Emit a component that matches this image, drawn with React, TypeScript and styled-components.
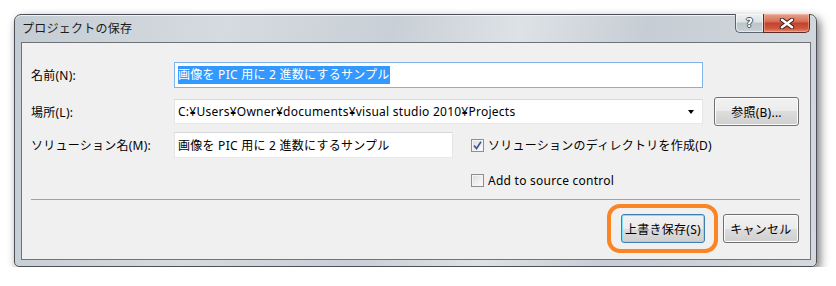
import React from 'react';
import styled, { createGlobalStyle } from 'styled-components';

const GlobalStyle = createGlobalStyle`
    body {
        margin: 0;
        background: #ffffff;
        font-family: "Noto Sans", "Noto Sans CJK JP", sans-serif;
        font-size: 12px;
        letter-spacing: 0.25px;
        color: #000;
    }
`

export default function App() {
  return (
    <Page>
        <GlobalStyle />
        <Window>
            <TitleBar>
                <Caption>プロジェクトの保存</Caption>
                <CaptionButtons>
                    <HelpButton>?</HelpButton>
                    <CloseButton>
                        <svg width="16" height="11" viewBox="0 0 16 11">
                            <path d="M3 1.8 L13 9.2 M13 1.8 L3 9.2" stroke="#3b1a14" strokeWidth="4.4" strokeLinecap="round" />
                            <path d="M3 1.8 L13 9.2 M13 1.8 L3 9.2" stroke="#ffffff" strokeWidth="2.6" strokeLinecap="round" />
                        </svg>
                    </CloseButton>
                </CaptionButtons>
            </TitleBar>
            <Client>
                <Row>
                    <Label>名前(N):</Label>
                    <TextBox width={529} focused>
                        <Selected>画像を PIC 用に 2 進数にするサンプル</Selected>
                    </TextBox>
                </Row>
                <Row top={9} height={29}>
                    <Label>場所(L):</Label>
                    <Combo>
                        <span>C:¥Users¥Owner¥documents¥visual studio 2010¥Projects</span>
                        <Arrow />
                    </Combo>
                    <Button width={85} left={11}>参照(B)...</Button>
                </Row>
                <Row top={6}>
                    <Label>ソリューション名(M):</Label>
                    <TextBox width={279}>画像を PIC 用に 2 進数にするサンプル</TextBox>
                    <CheckRow indent={18}>
                        <CheckBox>
                            <svg width="9" height="9" viewBox="0 0 9 9">
                                <path d="M1 4.5 L3.5 7.5 L8 0.8" stroke="#3d5a96" strokeWidth="1.7" fill="none" />
                            </svg>
                        </CheckBox>
                        <span>ソリューションのディレクトリを作成(D)</span>
                    </CheckRow>
                </Row>
                <Row top={14} height={16}>
                    <CheckRow indent={440}>
                        <CheckBox />
                        <span>Add to source control</span>
                    </CheckRow>
                </Row>
                <Separator />
                <ButtonRow>
                    <Highlight>
                        <Button width={84} primary>上書き保存(S)</Button>
                        <Ring />
                    </Highlight>
                    <Button width={76}>キャンセル</Button>
                </ButtonRow>
            </Client>
        </Window>
    </Page>
  )
}

const Page = styled.div`
    padding: 14px 0 0 14px;
`

const Window = styled.div`
    width: 803px;
    box-sizing: border-box;
    display: flex;
    flex-direction: column;
    border: 1px solid #4b5157;
    border-radius: 7px 7px 5px 5px;
    padding: 0 5px 6px 6px;
    background: linear-gradient(100deg, #c4ccd3 0%, #d5dbe0 25%, #c8cfd6 45%, #dde2e6 60%, #c6cdd4 75%, #d3d9de 100%);
    box-shadow: 3px 4px 10px rgba(0, 0, 0, 0.55), inset 0 1px 0 rgba(255, 255, 255, 0.7);
`

const TitleBar = styled.div`
    height: 27px;
    display: flex;
    justify-content: space-between;
    align-items: flex-start;
`

const Caption = styled.div`
    padding: 6px 0 0 1px;
    line-height: 15px;
    font-size: 12px;
    color: #1b1b1b;
`

const CaptionButtons = styled.div`
    display: flex;
    margin-right: 1px;
    margin-top: -1px;
`

const HelpButton = styled.div`
    width: 28px;
    height: 19px;
    box-sizing: border-box;
    border: 1px solid #5b646d;
    border-top: none;
    border-right: none;
    border-radius: 0 0 0 5px;
    background: linear-gradient(#eef1f3 0%, #dde2e6 45%, #bcc4cb 50%, #c9d0d6 100%);
    box-shadow: inset 0 0 0 1px rgba(255, 255, 255, 0.55);
    display: flex;
    align-items: center;
    justify-content: center;
    font-family: "DejaVu Sans", sans-serif;
    font-weight: bold;
    font-size: 12px;
    color: #fff;
    text-shadow: 1px 0 #4a5057, -1px 0 #4a5057, 0 1px #4a5057, 0 -1px #4a5057;
`

const CloseButton = styled.div`
    width: 47px;
    height: 19px;
    box-sizing: border-box;
    border: 1px solid #5a2b24;
    border-top: none;
    border-radius: 0 0 5px 0;
    background: linear-gradient(#e6a38f 0%, #d9715a 40%, #c3432c 52%, #cf573d 80%, #e48a6d 100%);
    box-shadow: inset 0 0 0 1px rgba(255, 210, 190, 0.4);
    display: flex;
    align-items: center;
    justify-content: center;
`

const Client = styled.div`
    background: #f0f0f0;
    border: 1px solid #6f7378;
    padding: 19px 11px 16px 9px;
    display: flex;
    flex-direction: column;
`

const Row = styled.div<{top?: number, height?: number}>`
    display: flex;
    align-items: center;
    margin-top: ${props => props.top || 0}px;
    height: ${props => props.height || 26}px;
`

const Label = styled.div`
    width: 143px;
    flex-shrink: 0;
`

const TextBox = styled.div<{width: number, focused?: boolean}>`
    width: ${props => props.width}px;
    height: 26px;
    box-sizing: border-box;
    background: #fff;
    border: 1px solid;
    border-color: ${props => props.focused ? '#7eb4ea' : '#d5d8dc #e2e5e9 #e6e9ec #e2e5e9'};
    padding: 0 3px;
    display: flex;
    align-items: center;
    white-space: nowrap;
`

const Selected = styled.span`
    background: #3399ff;
    color: #fff;
    line-height: 18px;
`

const Combo = styled.div`
    width: 529px;
    height: 25px;
    box-sizing: border-box;
    background: #fff;
    border: 1px solid;
    border-color: #d5d8dc #e2e5e9 #e6e9ec #e2e5e9;
    padding: 0 3px;
    display: flex;
    align-items: center;
    justify-content: space-between;
    white-space: nowrap;
`

const Arrow = styled.div`
    width: 0;
    height: 0;
    border-left: 3.5px solid transparent;
    border-right: 3.5px solid transparent;
    border-top: 4px solid #000;
    margin-right: 5px;
`

const Button = styled.div<{width: number, primary?: boolean, left?: number}>`
    width: ${props => props.width}px;
    height: 29px;
    margin-left: ${props => props.left || 0}px;
    box-sizing: border-box;
    border: 1px solid ${props => props.primary ? '#3c7fb1' : '#707070'};
    border-radius: 3px;
    background: linear-gradient(#f2f2f2 0%, #ebebeb 50%, #dddddd 50%, #cfcfcf 100%);
    box-shadow: inset 0 0 0 1px ${props => props.primary ? '#7ee0fb' : '#fcfcfc'};
    display: flex;
    align-items: center;
    justify-content: center;
    white-space: nowrap;
`

const CheckRow = styled.div<{indent: number}>`
    display: flex;
    align-items: center;
    gap: 4px;
    margin-left: ${props => props.indent}px;
    white-space: nowrap;
`

const CheckBox = styled.div`
    width: 13px;
    height: 13px;
    box-sizing: border-box;
    border: 1px solid #8e8f8f;
    background: linear-gradient(135deg, #dcdcdc 0%, #f0f0f0 60%, #ffffff 100%);
    box-shadow: inset 0 0 0 1px #f4f4f4;
    display: flex;
    align-items: center;
    justify-content: center;
`

const Separator = styled.div`
    margin: 11px -1px 0 0;
    border-top: 1px solid #a0a0a0;
`

const ButtonRow = styled.div`
    display: flex;
    justify-content: flex-end;
    gap: 18px;
    margin-top: 14px;
`

const Highlight = styled.div`
    position: relative;
`

const Ring = styled.div`
    position: absolute;
    left: -14px;
    top: -10px;
    width: 111px;
    height: 49px;
    box-sizing: border-box;
    border: 4px solid #fb8424;
    border-radius: 13px;
    pointer-events: none;
`
